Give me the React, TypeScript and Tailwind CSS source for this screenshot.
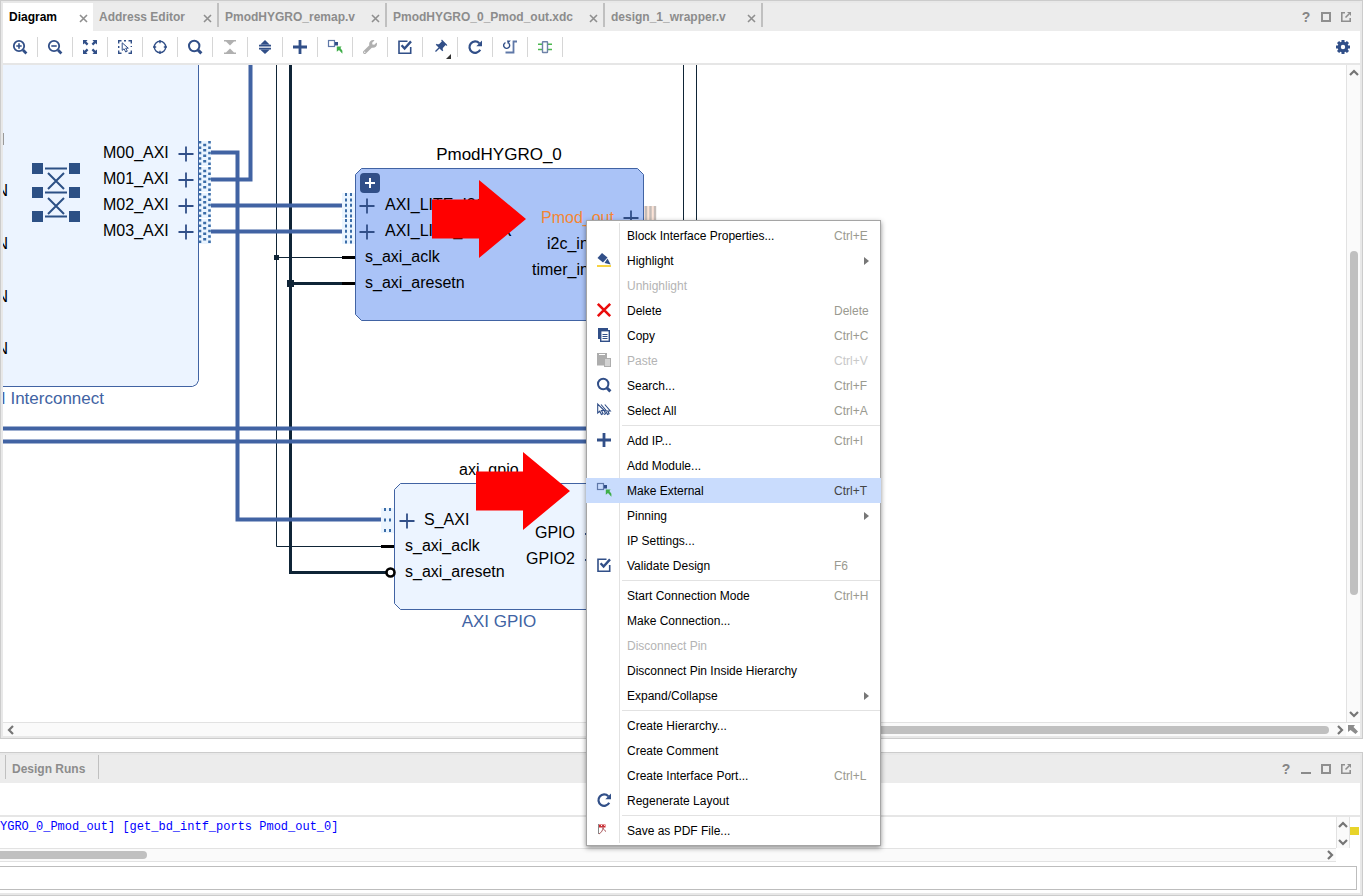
import type { ReactNode } from "react";
import { FaWrench } from "react-icons/fa";
import { MdPushPin } from "react-icons/md";

const NAVY = "#314f88";
const WIRE = "#4163a3";
const NET = "#0f2436";

function Icon({ children }: { children: ReactNode }) {
  return (
    <svg width="16" height="16" viewBox="0 0 16 16" fill="none" stroke={NAVY} aria-hidden="true">
      {children}
    </svg>
  );
}

const Search = () => (
  <Icon>
    <circle cx="7.2" cy="7" r="5.2" strokeWidth="2" />
    <path d="M11 11l3.4 3.4" strokeWidth="3" />
  </Icon>
);

const ZoomIn = () => (
  <Icon>
    <circle cx="7" cy="7" r="5.2" strokeWidth="1.8" />
    <path d="M11 11l3.4 3.4" strokeWidth="2.8" />
    <path d="M4.3 7h5.4M7 4.3v5.4" strokeWidth="1.6" />
  </Icon>
);

const ZoomOut = () => (
  <Icon>
    <circle cx="7" cy="7" r="5.2" strokeWidth="1.8" />
    <path d="M11 11l3.4 3.4" strokeWidth="2.8" />
    <path d="M4.3 7h5.4" strokeWidth="1.6" />
  </Icon>
);

const Fit = () => (
  <Icon>
    {[0, 90, 180, 270].map((a) => (
      <path
        key={a}
        transform={`rotate(${a} 8 8)`}
        d="M1 1h4.6L4.2 2.6 6.4 4.800 4.8 6.4 2.6 4.2 1 5.6z"
        fill={NAVY}
        stroke="none"
      />
    ))}
  </Icon>
);

const SelectArea = () => (
  <Icon>
    <path d="M1.7 4.5V1.7h2.800M11.500 1.7h2.800v2.800M14.3 11.500v2.800h-2.800M4.500 14.300H1.700v-2.800M7 1.700h2M1.700 7v2M14.300 7v1" strokeWidth="1.4" />
    <path d="M5.2 3.8v7.6l1.9-1.6 1.6 3.2 1.6-.8-1.6-3h2.6z" strokeWidth="1" />
  </Icon>
);

const Target = () => (
  <Icon>
    <circle cx="8" cy="8" r="5.700" strokeWidth="1.4" />
    <path d="M8 1v3.200M8 11.800V15M1 8h3.200M11.800 8H15" strokeWidth="1.4" />
  </Icon>
);

const Collapse = () => (
  <Icon>
    <g fill="#b0b0b0" stroke="none">
      <path d="M2 1h12v1.6H2zM4 2.6h8L8 6.4zM2 13.4h12V15H2zM4 13.4h8L8 9.6z" />
    </g>
  </Icon>
);

const Expand = () => (
  <Icon>
    <g fill={NAVY} stroke="none">
      <path d="M8 1l4.6 4.4H3.4zM2 5.800h12v1.6H2zM2 8.8h12v1.6H2zM3.4 10.8h9.2L8 15z" />
    </g>
  </Icon>
);

const Plus = () => (
  <Icon>
    <path d="M8 1v14M1 8h14" strokeWidth="2.8" />
  </Icon>
);

const MakeExternal = () => (
  <Icon>
    <rect x="1.5" y="1.5" width="6" height="6" stroke="#5f78a8" strokeWidth="1.2" />
    <path d="M8 3h3v3.5H8z" fill={NAVY} stroke="none" />
    <path d="M9.8 7.5h4.8l-1.2 1.6 2 2.6v3l-3.4-3.8-2.200 1.800z" fill="#3fae49" stroke="none" />
  </Icon>
);

const Validate = () => (
  <Icon>
    <path d="M10.5 2.3H2v11.900h11.700V8" strokeWidth="1.6" />
    <path d="M4.6 6.2l3 3.300L14 2.400" strokeWidth="2.4" />
  </Icon>
);

const Refresh = () => (
  <Icon>
    <path d="M13.2 10.8A5.7 5.7 0 1 1 12.3 4.2" strokeWidth="2.2" />
    <path d="M15 1.5v5.7H9.3z" fill={NAVY} stroke="none" />
  </Icon>
);

const Reroute = () => (
  <Icon>
    <path d="M15 2.5h-3.5v11H3.5" stroke="#5f78a8" strokeWidth="1.8" />
    <path d="M3.5 3.6A3 3 0 1 0 6.500 4" strokeWidth="1.4" />
    <path d="M5 1.5h3.8L5.800 5z" fill={NAVY} stroke="none" />
  </Icon>
);

const Chip = () => (
  <Icon>
    <path d="M1 5.2h14M1 10.5h14" stroke="#4bb84f" strokeWidth="1.6" />
    <rect x="5.5" y="2.7" width="5" height="10.8" rx="0.5" fill="#fff" stroke="#6f83a8" strokeWidth="1.4" />
  </Icon>
);

const Pin = () => (
  <span className="relative">
    <MdPushPin className="rotate-45 text-[#314f88]" size={16} />
    <svg className="absolute -right-[3px] -bottom-1" width="5" height="5" aria-hidden="true">
      <path d="M5 0v5H0z" fill="#333" />
    </svg>
  </span>
);

const Gear = () => (
  <Icon>
    <circle cx="8" cy="8" r="3.8" strokeWidth="3.2" />
    {[0, 45, 90, 135].map((a) => (
      <path
        key={a}
        transform={`rotate(${a} 8 8)`}
        d="M6.5 1h3v2.5h-3zM6.5 12.500h3V15h-3z"
        fill={NAVY}
        stroke="none"
      />
    ))}
  </Icon>
);

const Bucket = () => (
  <Icon>
    <path d="M6 1l5.500 4.600L7 10.500 1.500 6z" fill={NAVY} stroke="none" />
    <path d="M11.500 6.500l3.200 6L8.500 11z" fill={NAVY} stroke="none" />
    <path d="M1 14h14" stroke="#f6c915" strokeWidth="1.6" />
  </Icon>
);

const DeleteX = () => (
  <Icon>
    <path d="M1.800 1.800l12.400 12.400M14.200 1.800L1.800 14.200" stroke="#ea0c0c" strokeWidth="2.6" />
  </Icon>
);

const Copy = () => (
  <Icon>
    <path d="M2 12V1h10v2.500H4.500V12z" fill={NAVY} stroke="none" />
    <rect x="4.700" y="3.700" width="8.600" height="10.600" fill="#fff" strokeWidth="1.4" />
    <path d="M6.500 7.500h5M6.500 9.500h5M6.500 11.500h5" />
  </Icon>
);

const Paste = () => (
  <Icon>
    <path d="M1 1h10v12.500H1z" fill="#adadad" stroke="none" />
    <path d="M3 2.500h6" stroke="#fff" />
    <rect x="8.500" y="6.500" width="6" height="8" fill="#d2d2d2" stroke="#adadad" />
  </Icon>
);

const SelectAll = () => (
  <Icon>
    <path d="M1.700 2v9l2.100-1.800 1.600 3.300 1.700-.8-1.600-3.200h2.800z" strokeWidth="1.1" />
    <path d="M5 2.500l5.500 6.500H8.300l1.300 2.800-1.600.7M8.800 2.500l5.500 6.500h-2.500l1.300 2.800-1.600.7-1.200-2.500" strokeWidth="1.1" />
  </Icon>
);

const Pdf = () => (
  <Icon>
    <path d="M2.500 2v10" stroke="#888" />
    <path d="M3 2.500h6.500v3H3z" fill="#d3262c" stroke="none" />
    <path d="M3 12c2.500-1.500 4-4 4-6.500.5 2 1.500 3 3 4M4.500 4h3" stroke="#a9555a" />
    <path d="M5 3.500h1M8 3.500h.8" stroke="#fff" />
  </Icon>
);

const CloseGlyph = () => (
  <svg width="9" height="9" viewBox="0 0 9 9" stroke="#8f8f8f" strokeWidth="1.6" aria-hidden="true">
    <path d="M1 1l7 7M8 1L1 8" />
  </svg>
);

const tabs = [
  { name: "Diagram", box: "h-7 w-[90px] bg-white pb-1 text-black" },
  { name: "Address Editor", box: "h-6 w-[126px] border-r-2 border-[#c0c0c0] text-[#8c8c8c]" },
  { name: "PmodHYGRO_remap.v", box: "h-6 w-[168px] border-r-2 border-[#c0c0c0] text-[#8c8c8c]" },
  { name: "PmodHYGRO_0_Pmod_out.xdc", box: "h-6 w-[218px] border-r-2 border-[#c0c0c0] text-[#8c8c8c]" },
  { name: "design_1_wrapper.v", box: "h-6 w-[158px] border-r-2 border-[#c0c0c0] text-[#8c8c8c]" },
];

const tools = [
  { label: "Zoom In", icon: <ZoomIn /> },
  { label: "Zoom Out", icon: <ZoomOut /> },
  { label: "Zoom Fit", icon: <Fit /> },
  { label: "Select Area", icon: <SelectArea /> },
  { label: "Fit Selection", icon: <Target /> },
  { label: "Search", icon: <Search /> },
  { label: "Collapse All", icon: <Collapse /> },
  { label: "Expand All", icon: <Expand /> },
  { label: "Add IP", icon: <Plus /> },
  { label: "Make External", icon: <MakeExternal /> },
  { label: "Customize Block", icon: <FaWrench size={14} color="#b0b0b0" /> },
  { label: "Validate Design", icon: <Validate /> },
  { label: "Pin Blocks", icon: <Pin /> },
  { label: "Regenerate Layout", icon: <Refresh /> },
  { label: "Optimize Routing", icon: <Reroute /> },
  { label: "Interface View", icon: <Chip /> },
];

type Item = {
  label: string;
  keys?: string;
  icon?: ReactNode;
  disabled?: boolean;
  submenu?: boolean;
  active?: boolean;
};

const menu: Item[][] = [
  [
    { label: "Block Interface Properties...", keys: "Ctrl+E" },
    { label: "Highlight", icon: <Bucket />, submenu: true },
    { label: "Unhighlight", disabled: true },
    { label: "Delete", keys: "Delete", icon: <DeleteX /> },
    { label: "Copy", keys: "Ctrl+C", icon: <Copy /> },
    { label: "Paste", keys: "Ctrl+V", icon: <Paste />, disabled: true },
    { label: "Search...", keys: "Ctrl+F", icon: <Search /> },
    { label: "Select All", keys: "Ctrl+A", icon: <SelectAll /> },
  ],
  [
    { label: "Add IP...", keys: "Ctrl+I", icon: <Plus /> },
    { label: "Add Module..." },
    { label: "Make External", keys: "Ctrl+T", icon: <MakeExternal />, active: true },
    { label: "Pinning", submenu: true },
    { label: "IP Settings..." },
    { label: "Validate Design", keys: "F6", icon: <Validate /> },
  ],
  [
    { label: "Start Connection Mode", keys: "Ctrl+H" },
    { label: "Make Connection..." },
    { label: "Disconnect Pin", disabled: true },
    { label: "Disconnect Pin Inside Hierarchy" },
    { label: "Expand/Collapse", submenu: true },
  ],
  [
    { label: "Create Hierarchy..." },
    { label: "Create Comment" },
    { label: "Create Interface Port...", keys: "Ctrl+L" },
    { label: "Regenerate Layout", icon: <Refresh /> },
  ],
  [{ label: "Save as PDF File...", icon: <Pdf /> }],
];

function MenuItem({ item }: { item: Item }) {
  const text = item.disabled ? "text-[#b4b4b4]" : "text-black";
  const keys = item.active ? "text-[#444]" : item.disabled ? "text-[#c8c8c8]" : "text-[#9a9a90]";

  return (
    <button
      role="menuitem"
      disabled={item.disabled}
      className={`relative -mx-px flex h-[25px] items-center text-left ${text} ${item.active ? "bg-[#c9dcfd]" : ""}`}
    >
      <span className="flex w-[41px] items-center pb-[2px] pl-[10px]">{item.icon}</span>
      <span className="flex-1">{item.label}</span>
      {item.keys && <span className={`w-[47px] ${keys}`}>{item.keys}</span>}
      {item.submenu && (
        <svg className="mr-3" width="5" height="8" aria-hidden="true">
          <path d="M0 0l5 4-5 4z" fill="#777" />
        </svg>
      )}
    </button>
  );
}

function ContextMenu() {
  return (
    <div
      role="menu"
      className="absolute top-[220px] left-[586px] flex w-[295px] flex-col border border-[#a5a5a5] bg-white py-[2px] text-xs shadow-[0_2px_5px_rgba(0,0,0,0.45)]"
    >
      <div className="absolute inset-y-[2px] left-8 w-px bg-[#e2e2e2]" />
      {menu.map((group, i) => (
        <div key={group[0].label} className="flex flex-col">
          {i > 0 && <div role="separator" className="my-[2px] ml-[35px] h-px bg-[#e2e2e2]" />}
          {group.map((item) => (
            <MenuItem key={item.label} item={item} />
          ))}
        </div>
      ))}
    </div>
  );
}

function WindowButtons({ minimize = false }: { minimize?: boolean }) {
  return (
    <div className="ml-auto flex items-center pr-1">
      <button aria-label="Help" className="w-5 text-center text-sm font-bold text-[#858585]">?</button>
      {minimize && (
        <button aria-label="Minimize" className="flex w-5 justify-center">
          <svg width="10" height="10" aria-hidden="true">
            <path d="M0 9h10" stroke="#8a8a8a" strokeWidth="2" />
          </svg>
        </button>
      )}
      <button aria-label="Maximize" className="flex w-5 justify-center">
        <svg width="10" height="10" aria-hidden="true">
          <rect x="1" y="1" width="8" height="8" fill="none" stroke="#8f8f8f" strokeWidth="2" />
        </svg>
      </button>
      <button aria-label="Float" className="flex w-5 justify-center">
        <svg width="10" height="10" fill="none" stroke="#8f8f8f" strokeWidth="1.6" aria-hidden="true">
          <path d="M4 .8H.8v8.400h8.400V6" />
          <path d="M4.500 5.500L8 2" />
          <path d="M6 0h4v4z" fill="#8f8f8f" stroke="none" />
        </svg>
      </button>
    </div>
  );
}

const chevrons = {
  up: "M1 7l4-4 4 4",
  down: "M1 3l4 4 4-4",
  left: "M7 1L3 5l4 4",
  right: "M3 1l4 4-4 4",
};

function ScrollArrow({ dir }: { dir: keyof typeof chevrons }) {
  return (
    <button aria-label={`Scroll ${dir}`} className="flex h-3 w-3 shrink-0 items-center justify-center">
      <svg width="10" height="10" fill="none" stroke="#757575" strokeWidth="2.2" aria-hidden="true">
        <path d={chevrons[dir]} />
      </svg>
    </button>
  );
}

function Cross({ x, y }: { x: number; y: number }) {
  return <path d={`M${x - 7.5} ${y}h15M${x} ${y - 7.5}v15`} stroke={NAVY} strokeWidth="1.8" />;
}

/* Dotted interface stubs, one per bus pin */
function Stub({ x, y }: { x: number; y: number }) {
  return (
    <g stroke="#3b6da8">
      <rect x={x} y={y} width="13" height="25" fill="#ebf5ff" stroke="none" />
      <path d={`M${x + 4} ${y}v25M${x + 9} ${y}v25`} strokeWidth="2" strokeDasharray="3 2.4" />
    </g>
  );
}

function WideStub({ y }: { y: number }) {
  return (
    <g stroke="#3b6da8" strokeDasharray="2.5 2.9">
      <rect x="199" y={y} width="12" height="25" fill="#ebf5ff" stroke="none" />
      <path d={`M200 ${y}v25M209.500 ${y}v25`} strokeWidth="2.6" />
      <path d={`M204.700 ${y + 2.7}v21`} strokeWidth="3" />
    </g>
  );
}

const masters = [158, 184, 210, 236];

function Diagram() {
  return (
    <svg className="block h-full w-full" role="img" aria-label="Block design">
      <g transform="translate(-3 -65)" fontFamily="'Liberation Sans', Arial, sans-serif" fontSize="16">
        {/* nets */}
        <g fill="none" stroke={NET}>
          <path d="M276.500 60v486.500H382M276.500 257.500H343M683.500 60v400M696.500 60v400" />
          <path d="M290.500 60v512.500H386M290.500 283.500H343" strokeWidth="3" />
        </g>
        <rect x="274" y="255" width="5" height="5" fill={NET} />
        <rect x="287" y="280" width="7" height="7" fill={NET} />
        <path d="M342 257.500h13M342 283.500h13M381 546.500h13" stroke="#000" strokeWidth="3" />

        <g fill="none" stroke={WIRE} strokeWidth="4">
          <path d="M0 428.500h700M0 441.500h700" />
          <path d="M211 152.500h26.500v367H382" />
          <path d="M211 179.500h39.500V60" />
          <path d="M211 205.500h132M211 231.500h132" />
        </g>

        {/* AXI interconnect */}
        <path d="M-10 40H198.500V380.500l-2 4-4 2H-10z" fill="#ecf4ff" stroke={WIRE} />
        {masters.map((y, i) => (
          <g key={y}>
            <text x="103" y={y}>{`M0${i}_AXI`}</text>
            <Cross x={186} y={y - 4} />
            <WideStub y={y - 17} />
          </g>
        ))}
        {[196, 249, 302, 354].map((y) => (
          <text key={y} x="8" y={y} textAnchor="end">N</text>
        ))}
        <path d="M3.500 133v12" stroke="#999" />
        {[163, 187, 211].map((y) => (
          <g key={y}>
            <path d={`M32 ${y}h11v11H32zM69 ${y}h11v11H69z`} fill="#2c5085" />
            <path d={`M45 ${y + 5.5}h22`} stroke="#2c5085" strokeWidth="2" />
          </g>
        ))}
        <path d="M48 173l16 16M64 173l-16 16M48 198l16 16M64 198l-16 16" stroke="#2c5085" strokeWidth="2" />
        <text x="104" y="404" textAnchor="end" fontSize="17" fill="#4163a3">AXI Interconnect</text>

        {/* PmodHYGRO_0 */}
        <text x="499" y="160" textAnchor="middle" fontSize="17">PmodHYGRO_0</text>
        <Stub x={342} y={193} />
        <Stub x={342} y={219} />
        <path d="M361.500 168.500h276l6 6v140l-6 6h-276l-6-6v-140z" fill="#aac3f7" stroke={WIRE} />
        <rect x="360" y="173" width="20" height="20" rx="4" fill={NAVY} />
        <path d="M365 183h10M370 178v10" stroke="#fff" strokeWidth="2" />
        <Cross x={367} y={206} />
        <Cross x={367} y={232} />
        <text x="385" y="210">AXI_LITE_I2C</text>
        <text x="385" y="236">AXI_LITE_TIMER</text>
        <text x="365" y="262">s_axi_aclk</text>
        <text x="365" y="288">s_axi_aresetn</text>
        <text x="541" y="223" fill="#f58634">Pmod_out</text>
        <Cross x={631} y={218} />
        <text x="547" y="249">i2c_interrupt</text>
        <text x="532" y="275">timer_interrupt</text>
        <rect x="644" y="206" width="12" height="25" fill="#fbe3d6" />
        <path d="M646 206v25M650.500 206v25M655 206v25" stroke="#c4bcb8" strokeWidth="2.4" />

        {/* axi_gpio_0 */}
        <text x="459" y="475">axi_gpio_0</text>
        <rect x="381" y="508" width="13" height="25" fill="#ebf5ff" />
        <path d="M385 508v25M390 508v25" stroke="#3b6da8" strokeWidth="2" strokeDasharray="3 7.5" />
        <path d="M400.500 483.500h204v126h-204l-6-6v-114z" fill="#ecf4ff" stroke={WIRE} />
        <circle cx="390.500" cy="572.500" r="4" fill="#fff" stroke="#000" strokeWidth="2.6" />
        <Cross x={407} y={521} />
        <text x="424" y="525">S_AXI</text>
        <text x="405" y="551">s_axi_aclk</text>
        <text x="405" y="577">s_axi_aresetn</text>
        <text x="575" y="538" textAnchor="end">GPIO</text>
        <text x="575" y="564" textAnchor="end">GPIO2</text>
        <path d="M585 534h10M585 560h10" stroke={NAVY} strokeWidth="2" />
        <text x="499" y="627" textAnchor="middle" fontSize="17" fill="#4163a3">AXI GPIO</text>

        {/* callout arrows */}
        <path d="M432 199.500h47V180l47 39-47 39v-19.500h-47z" fill="#f00" />
        <path d="M476 471.500h47V452l47 39-47 39v-19.500h-47z" fill="#f00" />
      </g>
    </svg>
  );
}

export default function App() {
  return (
    <main className="relative flex min-h-screen flex-col overflow-hidden bg-white font-['Liberation_Sans',Arial,sans-serif] text-xs text-black">

      <section className="flex flex-1 flex-col border border-[#cccccc]">
        <div className="flex flex-1 flex-col border-2 border-[#e8e8e8]">

          <header className="flex h-7 bg-[#ececec]">
            <div className="flex items-start">
              {tabs.map((tab) => (
                <div
                  key={tab.name}
                  className={`flex items-center justify-between pr-[5px] pl-[6px] font-bold ${tab.box}`}
                >
                  <button className="pt-1 whitespace-nowrap">{tab.name}</button>
                  <button aria-label={`Close ${tab.name}`} className="pt-[6px]">
                    <CloseGlyph />
                  </button>
                </div>
              ))}
            </div>
            <WindowButtons />
          </header>

          <div className="flex h-[34px] items-start border-b-2 border-[#e6e6e6] bg-white">
            {tools.map((tool) => (
              <div key={tool.label} className="flex h-8 w-[35px] items-center">
                <button aria-label={tool.label} className="flex flex-1 justify-center">
                  {tool.icon}
                </button>
                <div className="h-5 w-px bg-[#d6d6d6]" />
              </div>
            ))}
            <button aria-label="Settings" className="mr-[9px] ml-auto flex h-8 items-center">
              <Gear />
            </button>
          </div>

          <div className="flex flex-1">
            <div className="relative flex-1 overflow-hidden">
              <div className="absolute inset-0">
                <Diagram />
              </div>
            </div>
            <div className="flex w-[14px] flex-col items-center border-l border-[#e2e2e2] bg-[#fafafa] py-[2px]">
              <ScrollArrow dir="up" />
              <div className="flex w-full flex-1 flex-col items-center pt-[3px]">
                <div className="basis-[27%]" />
                <div className="w-2 basis-[55%] rounded-full bg-[#c0c0c0]" />
              </div>
              <ScrollArrow dir="down" />
            </div>
          </div>

          <div className="flex h-[14px] border-t border-[#e2e2e2]">
            <div className="flex flex-1 items-center bg-[#fafafa] pl-[2px]">
              <ScrollArrow dir="left" />
              <div className="flex flex-1 justify-end pr-[5px]">
                <div className="h-2 w-[54%] rounded-full bg-[#c0c0c0]" />
              </div>
              <ScrollArrow dir="right" />
            </div>
            <button aria-label="Show overview" className="flex w-[14px] items-center justify-center">
              <svg width="10" height="10" aria-hidden="true">
                <path d="M0 0h7L5.500 2 10 6.500 7.500 9 2.500 5 0 7z" fill="#8c8c8c" />
              </svg>
            </button>
          </div>

        </div>
      </section>

      <section className="mt-[13px] flex flex-col border-y border-r border-[#cccccc]">
        <div className="flex flex-col border-y-2 border-r-2 border-[#e8e8e8]">

          <header className="flex h-7 bg-[#ececec] pl-[5px]">
            <button className="h-6 w-[94px] border-x border-[#c0c0c0] pt-1 pl-[6px] text-left font-bold text-[#8c8c8c]">
              Design Runs
            </button>
            <WindowButtons minimize />
          </header>

          <div className="h-[34px] border-b-2 border-[#e6e6e6]" />

          <div className="flex">
            <div className="flex flex-1 flex-col">
              <pre className="h-[31px] overflow-hidden pt-[2px] font-['Liberation_Mono','Courier_New',monospace] text-xs text-[#0000ff]">
                YGRO_0_Pmod_out] [get_bd_intf_ports Pmod_out_0]
              </pre>
              <div className="flex h-[14px] items-center justify-between border-y border-[#e2e2e2] bg-[#fafafa]">
                <div className="h-2 w-[11%] rounded-r-full bg-[#c0c0c0]" />
                <ScrollArrow dir="right" />
              </div>
            </div>
            <div className="flex h-[31px] w-[14px] flex-col items-center justify-between border-x border-[#e2e2e2] bg-[#fafafa] pt-[2px]">
              <ScrollArrow dir="up" />
              <ScrollArrow dir="down" />
            </div>
            <div className="w-[10px] pt-[10px] pr-px">
              <div className="h-2 bg-[#e8d42a]" />
            </div>
          </div>

          <div className="flex pt-1 pr-[3px] pb-[3px]">
            <input
              aria-label="Tcl command"
              className="h-6 flex-1 border-y border-r border-[#bdbdbd] px-2 outline-none"
            />
          </div>

        </div>
      </section>

      <ContextMenu />
    </main>
  );
}
